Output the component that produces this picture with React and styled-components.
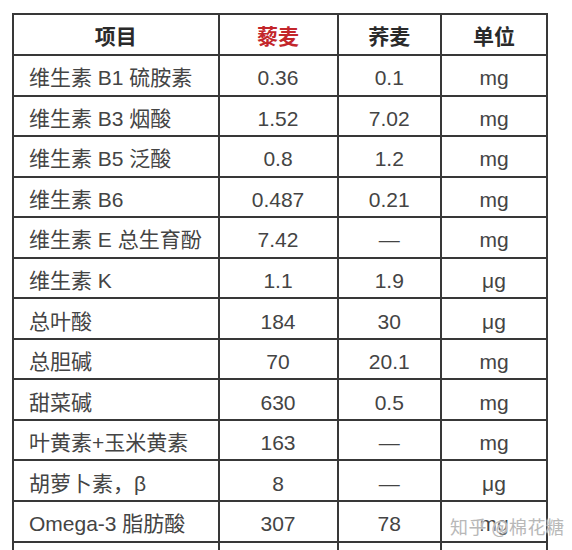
import React from "react";
import styled, { createGlobalStyle } from "styled-components";

const Global = createGlobalStyle`
  html, body { margin: 0; padding: 0; background: #fff; }
  body { font-family: "Liberation Sans", "Noto Sans CJK SC", sans-serif; }
`;

const Page = styled.div`
  position: relative;
  width: 572px;
  height: 550px;
  overflow: hidden;
  padding: 13px 0 0 12px;
  box-sizing: border-box;
  background: #fff;
`;

const Table = styled.table`
  border-collapse: collapse;
  table-layout: fixed;
  width: 534px;
  color: #444;
  font-size: 21px;
`;

const Row = styled.tr`
  height: ${(p) => (p.$head ? "41px" : "40.55px")};
`;

const Cell = styled.td`
  border: 2px solid #383838;
  padding: 5px 0 0 ${(p) => (p.$left ? "15px" : "0")};
  text-align: ${(p) => (p.$left ? "left" : "center")};
  vertical-align: middle;
  white-space: nowrap;
  line-height: 1;
`;

const HeadCell = styled.th`
  border: 2px solid #383838;
  padding: 4px 0 0;
  text-align: center;
  font-weight: bold;
  font-size: 21px;
  color: ${(p) => (p.$red ? "#c3262b" : "#2a2a2a")};
  line-height: 1;
`;

const Watermark = styled.div`
  position: absolute;
  left: 450px;
  top: 513px;
  font-size: 18px;
  color: #b8b8b8;
  letter-spacing: 0.5px;
  white-space: nowrap;
  text-shadow: 0 0 2px #fff, 0 0 2px #fff;
  font-family: "Noto Sans CJK SC", sans-serif;
`;

const rows = [
  ["维生素 B1 硫胺素", "0.36", "0.1", "mg"],
  ["维生素 B3 烟酸", "1.52", "7.02", "mg"],
  ["维生素 B5 泛酸", "0.8", "1.2", "mg"],
  ["维生素 B6", "0.487", "0.21", "mg"],
  ["维生素 E 总生育酚", "7.42", "—", "mg"],
  ["维生素 K", "1.1", "1.9", "μg"],
  ["总叶酸", "184", "30", "μg"],
  ["总胆碱", "70", "20.1", "mg"],
  ["甜菜碱", "630", "0.5", "mg"],
  ["叶黄素+玉米黄素", "163", "—", "mg"],
  ["胡萝卜素，β", "8", "—", "μg"],
  ["Omega-3 脂肪酸", "307", "78", "mg"],
  ["", "", "", ""],
];

export default function App() {
  return (
    <>
      <Global />
      <Page>
        <Table>
          <colgroup>
            <col style={{ width: "205.5px" }} />
            <col style={{ width: "119px" }} />
            <col style={{ width: "103.5px" }} />
            <col style={{ width: "106px" }} />
          </colgroup>
          <thead>
            <Row $head>
              <HeadCell>项目</HeadCell>
              <HeadCell $red>藜麦</HeadCell>
              <HeadCell>荞麦</HeadCell>
              <HeadCell>单位</HeadCell>
            </Row>
          </thead>
          <tbody>
            {rows.map((r, i) => (
              <Row key={i}>
                <Cell $left>{r[0]}</Cell>
                <Cell>{r[1]}</Cell>
                <Cell>{r[2]}</Cell>
                <Cell>{r[3]}</Cell>
              </Row>
            ))}
          </tbody>
        </Table>
        <Watermark>知乎 @棉花糖</Watermark>
      </Page>
    </>
  );
}
